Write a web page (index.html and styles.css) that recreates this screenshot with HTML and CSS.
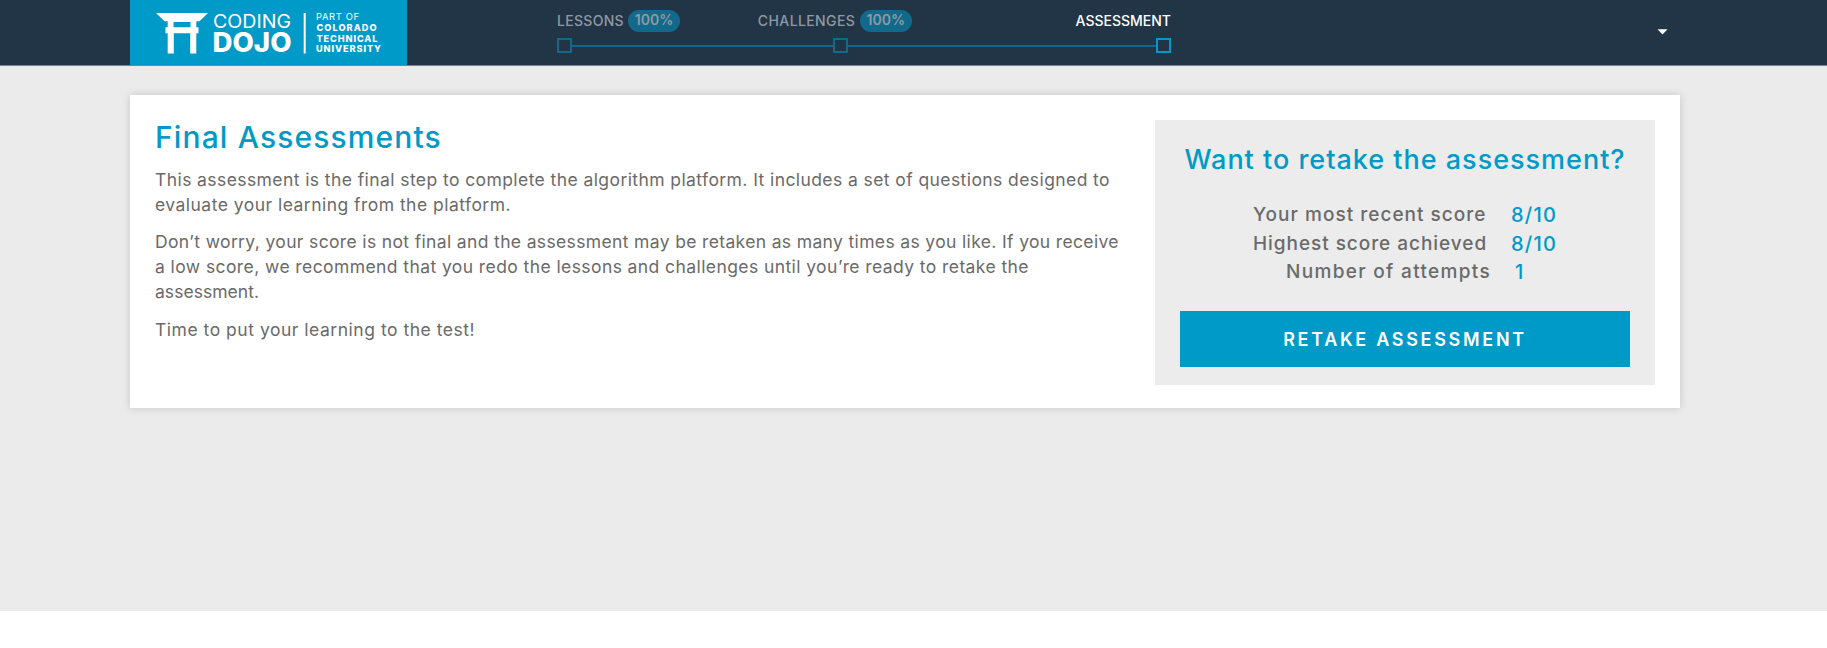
FILE: index.html
```
<!DOCTYPE html>
<html lang="en">
<head>
<meta charset="utf-8">
<title>Final Assessments</title>
<link rel="stylesheet" href="styles.css">
</head>
<body>
<header class="topbar">
  <a class="logo" aria-label="Coding Dojo">
    <svg width="277" height="65" viewBox="130 0 277 65">
      <g fill="#fff">
        <path d="M156 13H208L199.500 21.300H196.300V27.300H198.500V33.300H196.300V53.500H190.200V33.300H173.800V53.500H167.700V33.300H165.500V27.300H167.700V21.300H164.500ZM173.500 22V27.300H190.500V22Z"/>
        <rect x="303.700" y="13" width="2" height="40.500"/>
        <g class="logo-text">
          <text x="213" y="28" font-size="18.300" font-weight="400" textLength="78" lengthAdjust="spacingAndGlyphs">CODING</text>
          <text x="212.500" y="52" font-size="26.500" font-weight="800" textLength="79" lengthAdjust="spacingAndGlyphs">DOJO</text>
          <text x="316" y="20" font-size="9.400" font-weight="400" textLength="43" lengthAdjust="spacing">PART OF</text>
          <text x="316.500" y="31" font-size="9.200" font-weight="800" textLength="60" lengthAdjust="spacing">COLORADO</text>
          <text x="316.500" y="41.700" font-size="9.200" font-weight="800" textLength="61" lengthAdjust="spacing">TECHNICAL</text>
          <text x="316" y="52.300" font-size="9.200" font-weight="800" textLength="65" lengthAdjust="spacing">UNIVERSITY</text>
        </g>
      </g>
    </svg>
  </a>
  <nav class="progress">
    <div class="labels">
      <div class="step"><span class="name t-les">LESSONS</span><span class="pill">100%</span></div>
      <div class="step mid"><span class="name t-cha">CHALLENGES</span><span class="pill">100%</span></div>
      <div class="step current"><span class="name">ASSESSMENT</span></div>
    </div>
    <div class="track"><i class="box"></i><i class="line first"></i><i class="box"></i><i class="line"></i><i class="box on"></i></div>
  </nav>
  <svg class="caret" width="11" height="6" viewBox="0 0 11 6"><path d="M0.500 0.200H10.500L5.500 5.500Z" fill="#fff"/></svg>
</header>
<main class="page">
  <section class="card">
    <div class="intro">
      <h1>Final Assessments</h1>
      <p><span class="l1">This assessment is the final step to complete the algorithm platform. It includes a set of questions designed to</span><br><span class="l2">evaluate your learning from the platform.</span></p>
      <p><span class="l3">Don’t worry, your score is not final and the assessment may be retaken as many times as you like. If you receive</span><br><span class="l4">a low score, we recommend that you redo the lessons and challenges until you’re ready to retake the</span><br><span class="l5">assessment.</span></p>
      <p><span class="l6">Time to put your learning to the test!</span></p>
    </div>
    <aside class="panel">
      <h2>Want to retake the assessment?</h2>
      <ul class="scores">
        <li><span class="k1">Your most recent score</span><b>8/10</b></li>
        <li><span class="k2">Highest score achieved</span><b>8/10</b></li>
        <li class="attempts"><span class="k3">Number of attempts</span><b>1</b></li>
      </ul>
      <button class="retake">RETAKE ASSESSMENT</button>
    </aside>
  </section>
</main>
</body>
</html>
```
FILE: styles.css
```
* { box-sizing: border-box; }
body { margin: 0; background: #fff; font-family: Inter, "Open Sans", sans-serif; color: #6a6a6a; }
.topbar { display: flex; height: 66px; background: #223547; border-bottom: 1px solid #748590; padding-left: 130px; }
.logo { display: block; width: 277px; height: 65px; background: #009ac8; }
.logo svg { display: block; }
.logo-text { font-family: Inter, sans-serif; }
.progress { width: 614px; margin-left: 150px; padding-top: 10px; }
.labels { display: flex; height: 22px; color: #8f99a2; font-size: 14px; font-weight: 500; line-height: 22px; white-space: nowrap; }
.step { display: flex; width: 201px; }
.step.mid { width: 318px; }
.step.current { width: auto; color: #fff; }
.t-les { width: 71px; letter-spacing: .3px; }
.t-cha { width: 102px; letter-spacing: .4px; }
.pill { width: 52px; height: 22px; border-radius: 11px; background: #116a8c; text-align: center; font-weight: 600; line-height: 20px; }
.track { display: flex; align-items: center; margin-top: 6px; height: 15px; }
.box { width: 15px; height: 15px; border: 2px solid #116a8c; }
.box.on { border-color: #009ac8; }
.line { height: 2px; width: 308px; background: #116a8c; }
.line.first { width: 261px; }
.caret { display: block; margin: 29px 0 0 486px; }
.page { height: 545px; background: #ebebeb; padding: 29px 147px 0 130px; }
.card { display: flex; justify-content: space-between; height: 313px; padding: 25px; background: #fff; box-shadow: 0 0 8px rgba(0,0,0,.16); }
.intro { width: 975px; white-space: nowrap; font-size: 17.500px; line-height: 25px; }
h1, h2, p, ul { margin: 0; padding: 0; }
h1 { font-size: 30px; line-height: 34px; font-weight: 500; letter-spacing: 1.130px; color: #009ac8; margin-bottom: 13px; }
p { margin-bottom: 12px; }
p + p { margin-bottom: 13px; }
.l1 { letter-spacing: .416px; }
.l2 { letter-spacing: .470px; }
.l3 { letter-spacing: .354px; }
.l4 { letter-spacing: .414px; }
.l5 { letter-spacing: .040px; }
.l6 { letter-spacing: .520px; }
.panel { width: 500px; height: 265px; background: #ececec; padding: 25px; white-space: nowrap; }
h2 { font-size: 27px; line-height: 30px; font-weight: 500; letter-spacing: .990px; color: #009ac8; text-align: center; }
.scores { list-style: none; margin: 26px 0 0 73px; font-size: 19px; font-weight: 500; line-height: 28.500px; }
.scores li { display: flex; }
.scores li span { width: 258px; }
.scores li.attempts { padding-left: 33px; }
.scores li.attempts span { width: 229px; }
.k1 { letter-spacing: 1.020px; }
.k2 { letter-spacing: .950px; }
.k3 { letter-spacing: 1.330px; }
.scores b { font-weight: 500; font-size: 20px; letter-spacing: 1.200px; color: #009ac8; }
.retake { display: block; width: 450px; height: 56px; margin-top: 24px; border: 0; background: #009ac8; color: #fff; font: 600 18px/56px Inter, sans-serif; letter-spacing: 2.700px; padding: 1px 0 0; }
```
